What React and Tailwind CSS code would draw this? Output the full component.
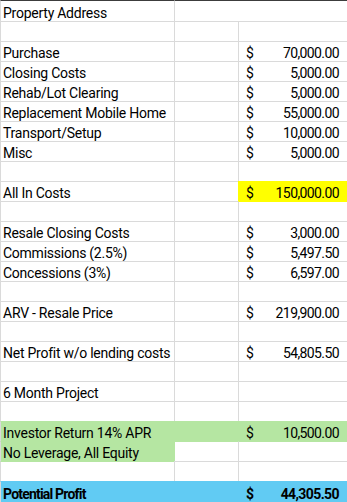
import React from 'react';

const FILL = {
  yellow: { bg: 'bg-[#ffff00]', t: 'border-t-[#ffff00]', l: 'border-l-[#ffff00]' },
  green: { bg: 'bg-[#b5e6a2]', t: 'border-t-[#b5e6a2]', l: 'border-l-[#b5e6a2]' },
  blue: { bg: 'bg-[#61cbf3]', t: 'border-t-[#61cbf3]', l: 'border-l-[#61cbf3]' },
};

// one entry per spreadsheet row; fill = [col A, col B, col C]
const rows = [
  { label: 'Property Address', merged: true },
  {},
  { label: 'Purchase', value: '70,000.00' },
  { label: 'Closing Costs', value: '5,000.00' },
  { label: 'Rehab/Lot Clearing', value: '5,000.00' },
  { label: 'Replacement Mobile Home', value: '55,000.00' },
  { label: 'Transport/Setup', value: '10,000.00' },
  { label: 'Misc', value: '5,000.00' },
  {},
  { label: 'All In Costs', value: '150,000.00', fill: [null, null, 'yellow'] },
  {},
  { label: 'Resale Closing Costs', value: '3,000.00' },
  { label: 'Commissions (2.5%)', value: '5,497.50' },
  { label: 'Concessions (3%)', value: '6,597.00' },
  {},
  { label: 'ARV - Resale Price', value: '219,900.00' },
  {},
  { label: 'Net Profit w/o lending costs', value: '54,805.50' },
  {},
  { label: '6 Month Project' },
  {},
  { label: 'Investor Return 14% APR', value: '10,500.00', fill: ['green', 'green', 'green'] },
  { label: 'No Leverage, All Equity', fill: ['green', null, null] },
  {},
  { label: 'Potential Profit', value: '44,305.50', fill: ['blue', 'blue', 'blue'], bold: true },
];

const fillAt = (i, c) => (rows[i] && rows[i].fill ? rows[i].fill[c] : null);

const Cell = ({ i, c, first, last, children, className = '' }) => {
  const own = fillAt(i, c);
  const above = i > 0 ? fillAt(i - 1, c) : null;
  const left = c > 0 ? fillAt(i, c - 1) : null;
  const topColor = first ? 'border-t-[#3c3c3c]' : own || above ? FILL[own || above].t : 'border-t-[#dadada]';
  const leftColor = c === 0 ? 'border-l-[#dadada]' : own || left ? FILL[own || left].l : 'border-l-[#dadada]';
  return (
    <div
      className={`flex items-end pb-px border-t border-l overflow-hidden whitespace-nowrap ${topColor} ${leftColor} ${
        own ? FILL[own].bg : 'bg-white'
      } ${first ? 'h-[21px]' : last ? 'h-[21px]' : 'h-[20px]'} ${className}`}
    >
      {children}
    </div>
  );
};

const App = () => {
  return (
    <div
      className="w-[347px] h-[502px] overflow-hidden bg-white text-black text-[14px] leading-[14px]"
      style={{ fontFamily: 'Roboto, "Liberation Sans", sans-serif' }}
    >
      {rows.map((r, i) => {
        const first = i === 0;
        const last = i === rows.length - 1;
        const weight = r.bold ? 'font-bold tracking-[-0.8px]' : 'tracking-[-0.25px]';
        return (
          <div key={i} className="grid grid-cols-[174px_64px_109px]">
            <Cell i={i} c={0} first={first} last={last} className="pl-[2px]">
              <span className={weight}>{r.label}</span>
            </Cell>
            {r.merged ? (
              <Cell i={i} c={1} first={first} last={last} className="col-span-2" />
            ) : (
              <>
                <Cell i={i} c={1} first={first} last={last} />
                <Cell i={i} c={2} first={first} last={last} className="pl-[7px] pr-[8px] justify-between">
                  {r.value && (
                    <>
                      <span className={r.bold ? 'font-bold' : ''}>$</span>
                      <span className={`tracking-[-0.6px] ${r.bold ? 'font-bold' : ''}`}>{r.value}</span>
                    </>
                  )}
                </Cell>
              </>
            )}
          </div>
        );
      })}
    </div>
  );
};

export default App;
